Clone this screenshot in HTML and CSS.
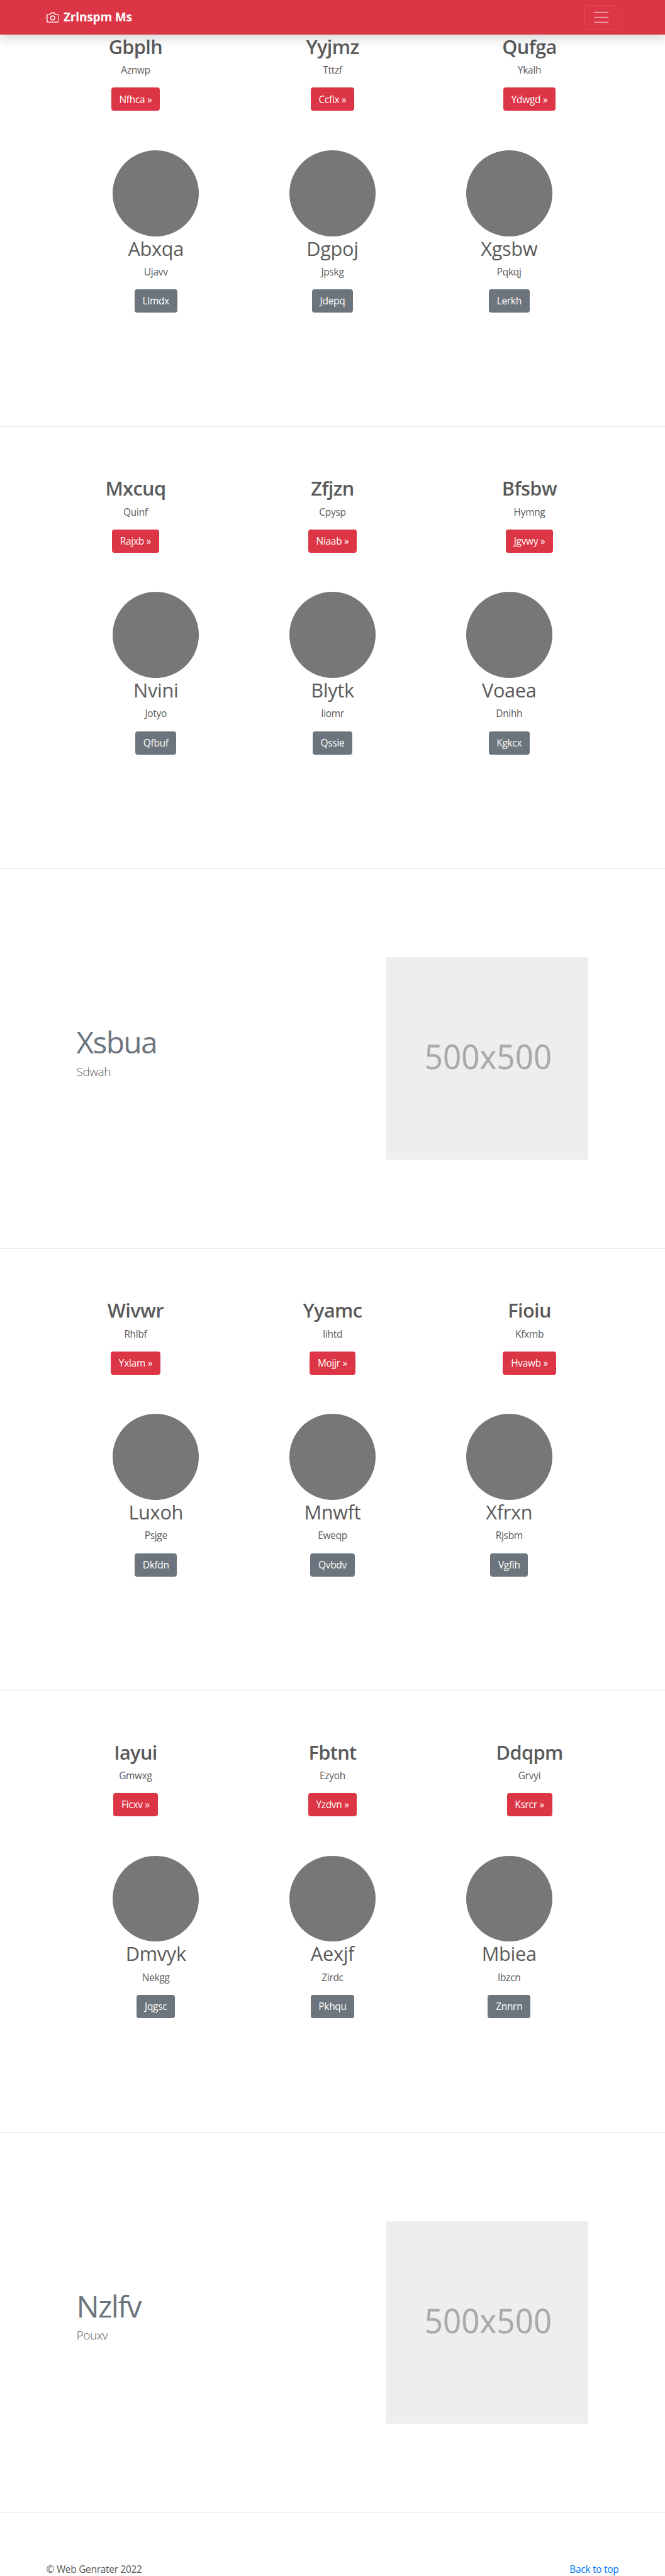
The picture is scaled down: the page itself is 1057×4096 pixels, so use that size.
FILE: index.html
```html
<!DOCTYPE html>
<html lang="en">
<head>
<meta charset="utf-8">
<title>Zrlnspm Ms</title>
<link rel="stylesheet" href="styles.css">
</head>
<body>
<header class="navbar">
  <div class="container navbar-inner">
    <a class="brand" href="#">
      <svg class="brand-icon" viewBox="0 0 24 24" fill="none" stroke="currentColor" stroke-width="1.8" stroke-linecap="round" stroke-linejoin="round"><path d="M23 19a2 2 0 0 1-2 2H3a2 2 0 0 1-2-2V8a2 2 0 0 1 2-2h4l2-3h6l2 3h4a2 2 0 0 1 2 2z"/><circle cx="12" cy="13" r="4"/></svg>
      <span>Zrlnspm Ms</span>
    </a>
    <button class="toggler" aria-label="Menu">
      <svg viewBox="0 0 30 30" stroke="rgba(255,255,255,.5)" stroke-width="2" stroke-linecap="round" stroke-miterlimit="10"><path d="M4 7h22M4 15h22M4 23h22"/></svg>
    </button>
  </div>
</header>
<main>
  <section class="block">
    <div class="row wide">
      <div class="col"><h2>Gbplh</h2><p>Aznwp</p><a class="btn danger" href="#">Nfhca »</a></div>
      <div class="col"><h2>Yyjmz</h2><p>Tttzf</p><a class="btn danger" href="#">Ccfix »</a></div>
      <div class="col"><h2>Qufga</h2><p>Ykalh</p><a class="btn danger" href="#">Ydwgd »</a></div>
    </div>
    <div class="row narrow">
      <div class="col"><div class="avatar"></div><h2>Abxqa</h2><p>Ujavv</p><a class="btn secondary" href="#">Llmdx</a></div>
      <div class="col"><div class="avatar"></div><h2>Dgpoj</h2><p>Jpskg</p><a class="btn secondary" href="#">Jdepq</a></div>
      <div class="col"><div class="avatar"></div><h2>Xgsbw</h2><p>Pqkqj</p><a class="btn secondary" href="#">Lerkh</a></div>
    </div>
  </section>
  <hr>
  <section class="block">
    <div class="row wide">
      <div class="col"><h2>Mxcuq</h2><p>Quinf</p><a class="btn danger" href="#">Rajxb »</a></div>
      <div class="col"><h2>Zfjzn</h2><p>Cpysp</p><a class="btn danger" href="#">Niaab »</a></div>
      <div class="col"><h2>Bfsbw</h2><p>Hymng</p><a class="btn danger" href="#">Jgvwy »</a></div>
    </div>
    <div class="row narrow">
      <div class="col"><div class="avatar"></div><h2>Nvini</h2><p>Jotyo</p><a class="btn secondary" href="#">Qfbuf</a></div>
      <div class="col"><div class="avatar"></div><h2>Blytk</h2><p>Iiomr</p><a class="btn secondary" href="#">Qssie</a></div>
      <div class="col"><div class="avatar"></div><h2>Voaea</h2><p>Dnihh</p><a class="btn secondary" href="#">Kgkcx</a></div>
    </div>
  </section>
  <hr>
  <section class="featurette">
    <div class="featurette-text"><h2>Xsbua</h2><p>Sdwah</p></div>
    <svg class="placeholder" viewBox="0 0 329 329"><rect width="329" height="329" fill="#eee"/><text x="62" y="181.5" textLength="207" lengthAdjust="spacingAndGlyphs">500x500</text></svg>
  </section>
  <hr>
  <section class="block">
    <div class="row wide">
      <div class="col"><h2>Wivwr</h2><p>Rhlbf</p><a class="btn danger" href="#">Yxlam »</a></div>
      <div class="col"><h2>Yyamc</h2><p>Iihtd</p><a class="btn danger" href="#">Mojjr »</a></div>
      <div class="col"><h2>Fioiu</h2><p>Kfxmb</p><a class="btn danger" href="#">Hvawb »</a></div>
    </div>
    <div class="row narrow">
      <div class="col"><div class="avatar"></div><h2>Luxoh</h2><p>Psjge</p><a class="btn secondary" href="#">Dkfdn</a></div>
      <div class="col"><div class="avatar"></div><h2>Mnwft</h2><p>Eweqp</p><a class="btn secondary" href="#">Qvbdv</a></div>
      <div class="col"><div class="avatar"></div><h2>Xfrxn</h2><p>Rjsbm</p><a class="btn secondary" href="#">Vgfih</a></div>
    </div>
  </section>
  <hr>
  <section class="block">
    <div class="row wide">
      <div class="col"><h2>Iayui</h2><p>Gmwxg</p><a class="btn danger" href="#">Ficxv »</a></div>
      <div class="col"><h2>Fbtnt</h2><p>Ezyoh</p><a class="btn danger" href="#">Yzdvn »</a></div>
      <div class="col"><h2>Ddqpm</h2><p>Grvyi</p><a class="btn danger" href="#">Ksrcr »</a></div>
    </div>
    <div class="row narrow">
      <div class="col"><div class="avatar"></div><h2>Dmvyk</h2><p>Nekgg</p><a class="btn secondary" href="#">Jqgsc</a></div>
      <div class="col"><div class="avatar"></div><h2>Aexjf</h2><p>Zirdc</p><a class="btn secondary" href="#">Pkhqu</a></div>
      <div class="col"><div class="avatar"></div><h2>Mbiea</h2><p>Ibzcn</p><a class="btn secondary" href="#">Znnrn</a></div>
    </div>
  </section>
  <hr>
  <section class="featurette">
    <div class="featurette-text"><h2>Nzlfv</h2><p>Pouxv</p></div>
    <svg class="placeholder" viewBox="0 0 329 329"><rect width="329" height="329" fill="#eee"/><text x="62" y="181.5" textLength="207" lengthAdjust="spacingAndGlyphs">500x500</text></svg>
  </section>
  <hr>
</main>
<footer class="container footer">
  <span>© Web Genrater 2022</span>
  <a href="#">Back to top</a>
</footer>
</body>
</html>
```
FILE: styles.css
```css
* { box-sizing: border-box; }

/* 1rem is ten layout units */
html { font-size: 9.783px; }

body {
  margin: 0;
  background: #fff;
  color: #5a5a5a;
  font: 400 1.58rem/2.4rem "Open Sans", "Noto Sans", sans-serif;
  letter-spacing: -.018em;
}

h2, p { margin: 0; }
a { text-decoration: none; }

.container {
  width: 96rem;
  margin: 0 auto;
  padding: 0 1.5rem;
}

.navbar {
  position: relative;
  height: 5.6rem;
  background: #dc3545;
  box-shadow: 0 .8rem 1.6rem rgba(0, 0, 0, .15);
}

.navbar-inner {
  display: flex;
  align-items: center;
  justify-content: space-between;
  height: 100%;
}

.brand {
  display: flex;
  align-items: center;
  gap: .8rem;
  color: #fff;
  font-size: 1.95rem;
  font-weight: 700;
  letter-spacing: -.01em;
}

.brand-icon { width: 2rem; height: 2rem; }

.toggler {
  display: flex;
  align-items: center;
  justify-content: center;
  width: 5.6rem;
  height: 4rem;
  padding: 0;
  border: 1px solid rgba(255, 255, 255, .1);
  border-radius: .4rem;
  background: none;
}

.toggler svg { width: 3rem; height: 3rem; }

.block { height: 63.7rem; }

.row {
  display: grid;
  grid-template-columns: repeat(3, 1fr);
  margin: 0 auto;
  text-align: center;
}

.wide { width: 96rem; }
.narrow { width: 86.1rem; padding-top: 6.36rem; }

.col h2 {
  margin-bottom: .6rem;
  font-size: 3.14rem;
  line-height: 4.04rem;
  font-weight: 400;
  letter-spacing: -.01em;
}

.wide h2 { font-weight: 600; letter-spacing: -.02em; }
.col p { margin-bottom: 1.6rem; }

.avatar {
  width: 14rem;
  height: 14rem;
  margin: 0 auto;
  border-radius: 50%;
  background: #777;
}

.btn {
  display: inline-block;
  height: 3.8rem;
  padding: .75rem 1.3rem;
  border-radius: .4rem;
  color: #fff;
  vertical-align: top;
}

.danger { background: #dc3545; }
.secondary { background: #6c757d; }

hr {
  height: 1px;
  margin: 0 0 8rem;
  border: 0;
  background: #e3e3e3;
}

.featurette {
  display: flex;
  align-items: center;
  justify-content: space-between;
  width: 83.2rem;
  height: 53.7rem;
  margin: 0 auto;
  padding-bottom: 8rem;
}

.featurette-text { padding-bottom: 1.8rem; }

.featurette-text h2 {
  margin-bottom: .6rem;
  color: #6c757d;
  font-size: 4.9rem;
  line-height: 5.6rem;
  font-weight: 400;
  letter-spacing: -.035em;
}

.featurette-text p {
  font-size: 1.95rem;
  line-height: 2.8rem;
  font-weight: 300;
  letter-spacing: -.025em;
}

.placeholder { width: 32.9rem; height: 32.9rem; }

.placeholder text {
  fill: #aaa;
  font: 400 56px "Noto Sans", sans-serif;
  letter-spacing: 0;
}

.footer {
  display: flex;
  justify-content: space-between;
}

.footer a { color: #007bff; }
```
